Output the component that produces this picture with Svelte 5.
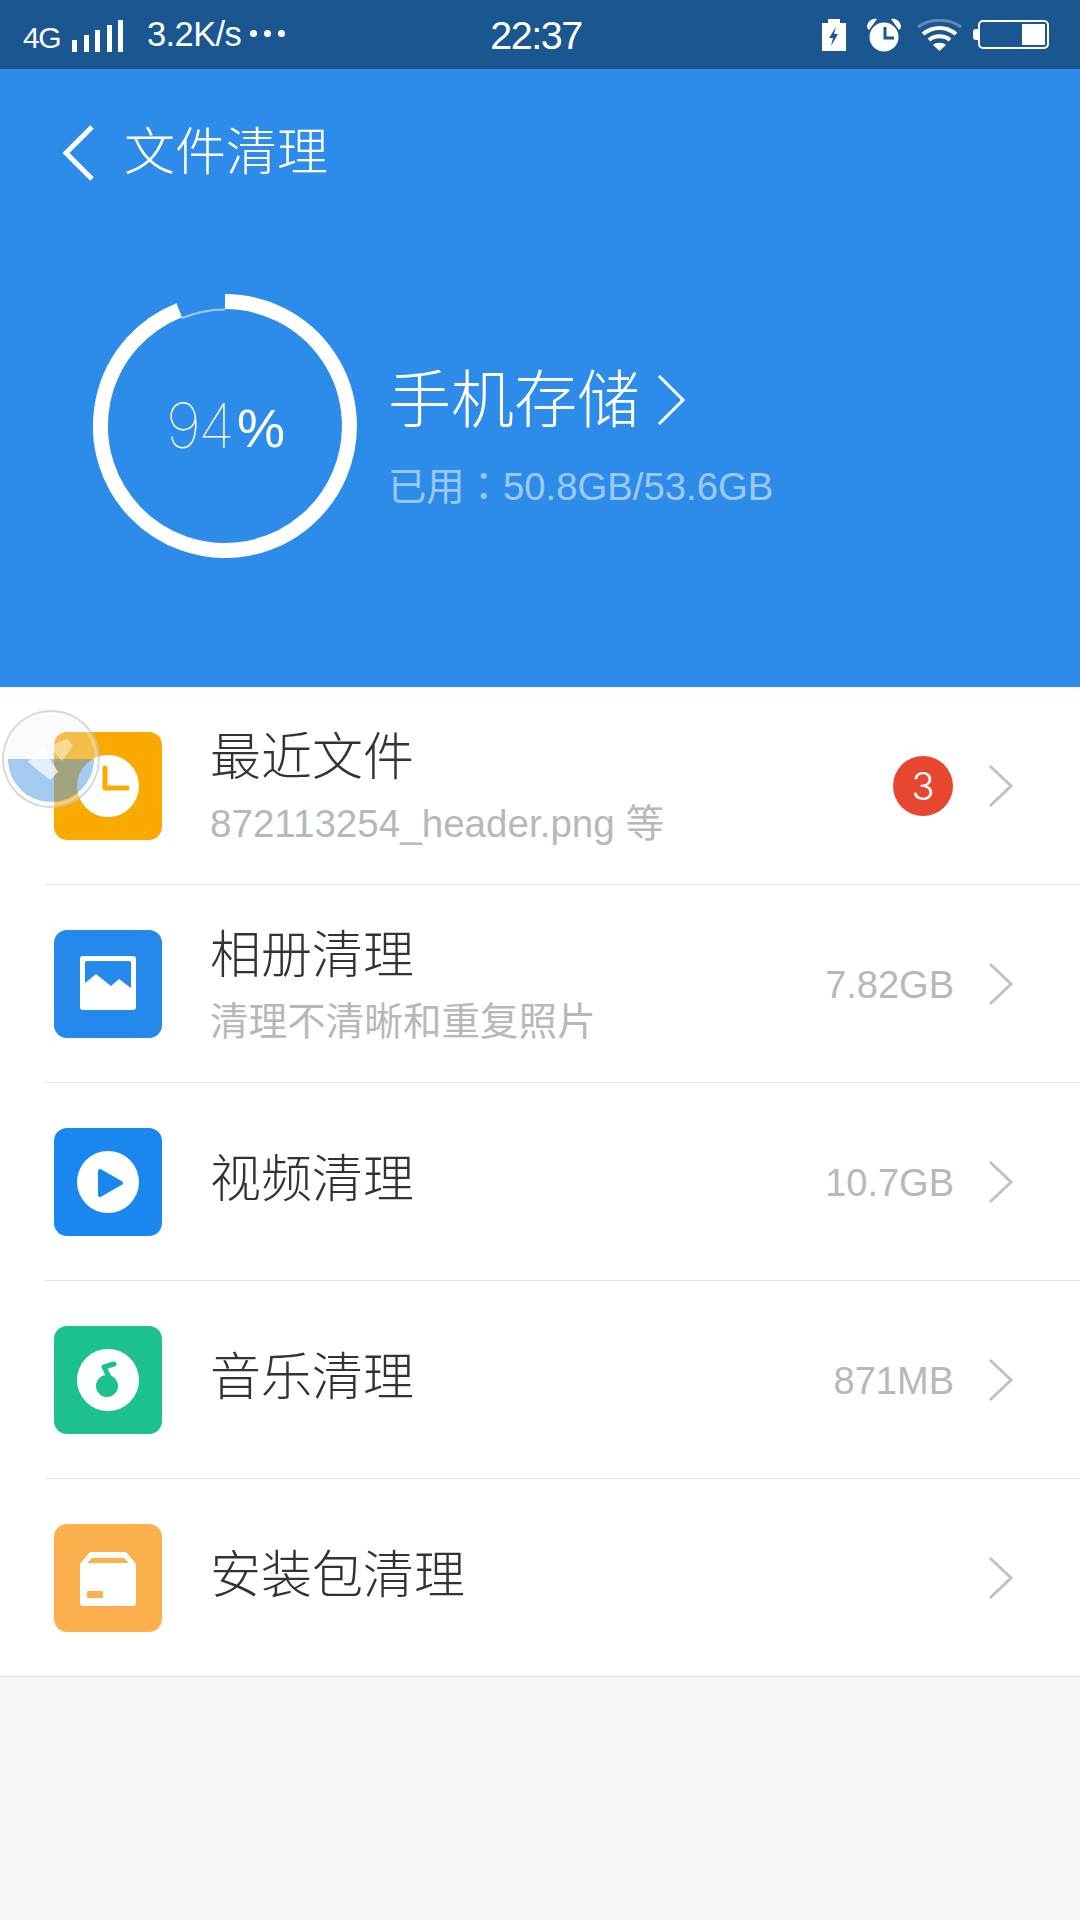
<script>
  const rows = [
    { title: '最近文件', sub: '872113254_header.png 等', badge: '3', icon: 'clock', color: '#f9aa00' },
    { title: '相册清理', sub: '清理不清晰和重复照片', value: '7.82GB', icon: 'photo', color: '#2489ea' },
    { title: '视频清理', value: '10.7GB', icon: 'video', color: '#1a87ee' },
    { title: '音乐清理', value: '871MB', icon: 'music', color: '#1cc18f' },
    { title: '安装包清理', icon: 'box', color: '#fdb04e' }
  ];
</script>

<div class="page">
  <div class="status">
    <div class="st-left">
      <span class="net">4G</span>
      <svg class="bars" width="51" height="32" viewBox="0 0 51 32" fill="#fff">
        <rect x="0" y="20" width="5" height="12"/><rect x="12" y="15" width="5" height="17"/><rect x="23" y="10" width="5" height="22"/><rect x="35" y="5" width="5" height="27"/><rect x="46" y="0" width="5" height="32"/>
      </svg>
      <span class="speed">3.2K/s</span>
      <span class="dots"><i></i><i></i><i></i></span>
    </div>
    <div class="clock">22:37</div>
    <div class="st-right">
      <svg width="24" height="32" viewBox="0 0 24 32"><path d="M0 4h6V0h12v4h6v28H0z" fill="#fff"/><path d="M14 8L7 19h4l-2 8 7-12h-4z" fill="#1a5690"/></svg>
      <svg class="alarm" width="34" height="34" viewBox="0 0 34 34"><circle cx="17" cy="19" r="14.500" fill="#fff"/><path d="M0 8C1 3 5 0 10 1L2 12C1 11 0 10 0 8zM34 8C33 3 29 0 24 1L32 12C33 11 34 10 34 8z" fill="#fff"/><path d="M18 9v11h9" fill="none" stroke="#1a5690" stroke-width="3"/></svg>
      <svg class="wifi" width="45" height="32" viewBox="0 0 45 32" fill="none" stroke="#fff"><path d="M1 8c12-9 31-9 43 0" stroke-opacity=".3" stroke-width="3"/><path d="M6 15c10-8 23-8 33 0M12 21c6-5 15-5 21 0" stroke-width="4"/><path d="M16 26c3-3 10-3 13 0l-6.500 6z" fill="#fff" stroke="none"/></svg>
      <div class="battery"><span class="nub"></span><span class="fill"></span></div>
    </div>
  </div>

  <header class="hero">
    <div class="nav">
      <svg width="34" height="56" viewBox="0 0 34 56" fill="none" stroke="#fff" stroke-width="5"><path d="M31 2L5 28l26 26"/></svg>
      <span class="nav-title">文件清理</span>
    </div>
    <div class="storage">
      <div class="ring">
        <svg width="264" height="264" viewBox="0 0 264 264" fill="none">
          <path d="M132 15.500A116.500 116.500 0 0 0 89 24" stroke="#fff" stroke-opacity=".55" stroke-width="2"/>
          <path d="M132 7.500A124.500 124.500 0 1 1 86.200 16.200" stroke="#fff" stroke-width="15"/>
        </svg>
        <div class="pct"><span class="num">94</span><span class="sign">%</span></div>
      </div>
      <div class="info">
        <div class="info-title">手机存储
          <svg width="30" height="54" viewBox="0 0 30 54" fill="none" stroke="#fff" stroke-width="3"><path d="M3 3l24 24L3 51"/></svg>
        </div>
        <div class="info-sub">已用：50.8GB/53.6GB</div>
      </div>
    </div>
  </header>

  <ul class="list">
    {#each rows as r}
      <li class="row">
        <span class="icon" style="background:{r.color}">
          {#if r.icon === 'clock'}
            <svg width="108" height="108" viewBox="0 0 108 108"><circle cx="54" cy="54" r="31" fill="#fff"/><path d="M51 36v20h22" fill="none" stroke="#f9aa00" stroke-width="5" stroke-linecap="round" stroke-linejoin="round"/></svg>
          {:else if r.icon === 'photo'}
            <svg width="108" height="108" viewBox="0 0 108 108"><rect x="26" y="26" width="56" height="54" rx="3" fill="#fff"/><path d="M31 33q0-2 2-2h42q2 0 2 2v25L65 49l-8 7-15-12-11 9z" fill={r.color}/></svg>
          {:else if r.icon === 'video'}
            <svg width="108" height="108" viewBox="0 0 108 108"><circle cx="54" cy="54" r="31" fill="#fff"/><path d="M46 43l21 12-21 12z" fill={r.color} stroke={r.color} stroke-width="4" stroke-linejoin="round"/></svg>
          {:else if r.icon === 'music'}
            <svg width="108" height="108" viewBox="0 0 108 108"><circle cx="54" cy="54" r="31" fill="#fff"/><circle cx="53" cy="60" r="11" fill={r.color}/><path d="M60 38L50 41l7 14" fill="none" stroke={r.color} stroke-width="5" stroke-linecap="round" stroke-linejoin="round"/></svg>
          {:else}
            <svg width="108" height="108" viewBox="0 0 108 108"><path d="M26 40l9-11a3 3 0 0 1 2-1h34a3 3 0 0 1 2 1l9 11v39a3 3 0 0 1-3 3H29a3 3 0 0 1-3-3z" fill="#fff"/><path d="M33 39l5-5h32l5 5z" fill={r.color}/><rect x="33" y="67" width="16" height="7" rx="1" fill={r.color}/></svg>
          {/if}
        </span>
        <div class="text" class:two={r.sub}>
          <div class="title">{r.title}</div>
          {#if r.sub}<div class="sub">{r.sub}</div>{/if}
        </div>
        {#if r.badge}<span class="badge">{r.badge}</span>{/if}
        {#if r.value}<span class="value">{r.value}</span>{/if}
        <svg class="chev" width="26" height="44" viewBox="0 0 26 44" fill="none" stroke="#c2c2c2" stroke-width="3"><path d="M2 2l21 20L2 42"/></svg>
      </li>
    {/each}
  </ul>

  <div class="float" aria-hidden="true">
    <span class="water"></span>
    <svg width="98" height="98" viewBox="0 0 98 98"><path d="M26 52l15-15 15 25-8 8z" fill="#fff" fill-opacity=".72"/><path d="M47 36l18-7 6 7-11 15z" fill="#fff" fill-opacity=".42"/></svg>
  </div>
</div>

<style>
  :global(body) { margin: 0; background: #f5f7f7; }
  .page { position: relative; width: 1080px; height: 1920px; background: #f5f7f7; overflow: hidden; font-family: "Liberation Sans", "Noto Sans CJK SC", sans-serif; }
  .status { height: 69px; background: #1a5690; color: #fff; display: grid; grid-template-columns: 1fr auto 1fr; align-items: center; box-sizing: border-box; padding: 0 31px 0 23px; }
  .st-left { display: flex; align-items: center; }
  .net { font-size: 30px; letter-spacing: -1.500px; margin-top: 6px; }
  .bars { margin-left: 12px; margin-top: 2px; }
  .speed { font-size: 34.500px; letter-spacing: -0.600px; margin-left: 24px; }
  .dots { display: flex; gap: 7px; margin-left: 9px; margin-top: -2px; }
  .dots i { width: 7px; height: 7px; border-radius: 50%; background: #fff; }
  .clock { font-size: 39.500px; letter-spacing: -1.500px; margin-top: 2px; }
  .st-right { display: flex; align-items: center; justify-content: flex-end; }
  .alarm { margin-left: 21px; }
  .wifi { margin-left: 16px; }
  .battery { position: relative; width: 71px; height: 29px; border: 2px solid #fff; border-radius: 5px; box-sizing: border-box; margin-left: 16px; }
  .nub { position: absolute; left: -7px; top: 7px; width: 5px; height: 11px; background: #fff; border-radius: 3px 0 0 3px; }
  .fill { position: absolute; right: 2px; top: 2px; bottom: 2px; width: 23px; background: #fff; }
  .hero { height: 618px; background: #2d8ce9; box-sizing: border-box; color: #fff; padding-top: 56px; }
  .nav { display: flex; align-items: center; height: 56px; padding-left: 61px; }
  .nav-title { font-size: 51px; margin-left: 29px; font-weight: 300; line-height: 56px; }
  .storage { display: flex; align-items: center; margin-top: 113px; padding-left: 93px; }
  .ring { position: relative; width: 264px; height: 264px; flex: none; }
  .ring svg { display: block; }
  .pct { position: absolute; inset: 0; display: flex; align-items: center; justify-content: center; line-height: 1; padding-left: 1px; }
  .num { font-family: Inter, sans-serif; font-weight: 100; font-size: 62px; letter-spacing: -3px; }
  .sign { font-size: 54px; margin-left: 5px; margin-top: 3px; }
  .info { margin-left: 31px; padding-top: 21px; }
  .info-title { display: flex; align-items: center; font-size: 63px; font-weight: 300; line-height: 72px; gap: 16px; }
  .info-sub { font-size: 38.300px; color: rgba(255,255,255,.55); margin-top: 29px; line-height: 44px; font-family: "Liberation Sans", "Noto Sans CJK TC", sans-serif; }
  .list { margin: 0; padding: 0; list-style: none; background: #fff; }
  .row { display: flex; align-items: center; height: 198px; box-sizing: border-box; margin-left: 45px; padding: 0 66px 0 9px; border-bottom: 1px solid #e3e3e3; }
  .row:last-child { margin-left: 0; padding-left: 54px; }
  .icon { width: 108px; height: 108px; border-radius: 13px; flex: none; }
  .icon svg { display: block; }
  .text { flex: 1; margin-left: 48px; margin-top: -4px; }
  .text.two { margin-top: 3px; }
  .title { font-size: 51px; line-height: 60px; color: #333; font-weight: 300; }
  .sub { font-size: 38.600px; line-height: 44px; color: #b8b8b8; margin-top: 14px; }
  .badge { width: 60px; height: 60px; border-radius: 50%; background: #e8472f; color: #fff; font: 300 38px/60px Inter, sans-serif; text-align: center; }
  .value { font-size: 38px; color: #b8b8b8; margin-top: 3px; margin-right: -1px; }
  .chev { margin-left: 35px; flex: none; }
  .float { position: absolute; left: 2px; top: 710px; width: 98px; height: 98px; box-sizing: border-box; border: 2px solid rgba(190,190,190,.55); border-radius: 50%; background: rgba(235,240,245,.3); box-shadow: inset 0 0 0 3px rgba(255,255,255,.25); }
  .float svg { position: absolute; left: -2px; top: -2px; }
  .water { position: absolute; left: 4px; right: 4px; bottom: 4px; height: 43px; border-radius: 0 0 44px 44px; background: rgba(20,120,216,.37); }
</style>
